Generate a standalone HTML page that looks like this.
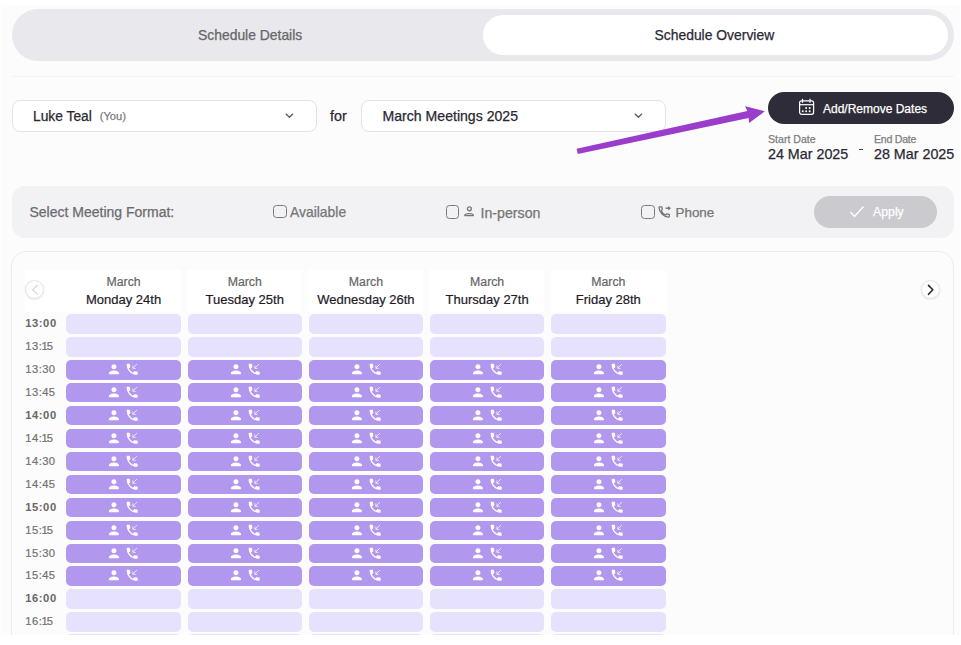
<!DOCTYPE html>
<html><head><meta charset="utf-8">
<style>
*{box-sizing:border-box;margin:0;padding:0}
html,body{width:961px;height:645px;overflow:hidden;background:#fff;font-family:"Liberation Sans",sans-serif}
#page{position:absolute;left:1px;top:5px;width:959px;height:630px;background:#fcfcfc;overflow:hidden}
.abs{position:absolute}
.t{position:absolute;white-space:nowrap;line-height:1;-webkit-text-stroke:0.25px currentColor}
#tabs{left:10.5px;top:3.8px;width:942.5px;height:52px;border-radius:26px;background:#e9e8ed}
#tabon{left:481.6px;top:10.4px;width:465.9px;height:39.6px;border-radius:20px;background:#fff}
#sep{left:10.5px;top:71px;width:942.5px;height:1px;background:#f3f3f4}
.dd{position:absolute;top:94.9px;height:31.8px;border:1.3px solid #e3e2ea;border-radius:8px;background:#fff}
.chev{position:absolute;width:5px;height:5px;border-right:1.3px solid #555;border-bottom:1.3px solid #555;transform:rotate(45deg)}
#addbtn{left:767px;top:86.6px;width:185.7px;height:32.6px;border-radius:17px;background:#2e2c38}
#filter{left:10.5px;top:180.8px;width:942.3px;height:52.2px;border-radius:13px;background:#f2f2f4}
.cb{position:absolute;width:13.5px;height:13.3px;border:1.75px solid #7a7a7a;border-radius:3.5px;background:transparent}
#apply{left:813px;top:190.6px;width:122.6px;height:32.4px;border-radius:17px;background:#cbcacf}
#card{left:10.2px;top:246.2px;width:942.9px;height:420px;border:1px solid #ebebef;border-radius:15px;background:#fcfcfc}
.hd{position:absolute;top:264.5px;height:42px;background:#fff}
.slot{position:absolute;height:19.4px;border-radius:5px}
.l{background:#e6e2fd}
.d{background:#b198ee}
.ic{position:absolute;left:39.2px;top:0}
.tm{position:absolute;left:24.3px;font-size:11.2px;color:#717171;line-height:1;letter-spacing:0.45px;white-space:nowrap;-webkit-text-stroke:0.2px currentColor}
.tm .o{margin-left:-0.8px;margin-right:-1.4px}
.tm.b{font-weight:bold;color:#676767;letter-spacing:0.55px;-webkit-text-stroke:0}
.hc{position:absolute;top:270.7px;width:114.5px;text-align:center;line-height:1;-webkit-text-stroke:0.2px currentColor}
.mo{font-size:12.3px;color:#666;height:17.8px}
.dy{font-size:13px;color:#1d1b26}
.circ{position:absolute;width:19px;height:19px;border-radius:50%;background:#fff;box-shadow:0 1px 2px rgba(40,40,80,.10);border:1.2px solid #e6e5ec}
</style></head>
<body>
<svg width="0" height="0" style="position:absolute">
 <defs>
  <symbol id="pp" viewBox="0 0 24 24" width="15.1" height="15.1"><path fill="#fff" d="M12 12c2.21 0 4-1.79 4-4s-1.79-4-4-4-4 1.79-4 4 1.79 4 4 4zm0 2c-2.67 0-8 1.34-8 4v1c0 .55.45 1 1 1h14c.55 0 1-.45 1-1v-1c0-2.66-5.33-4-8-4z"/></symbol>
  <symbol id="ph" viewBox="0 0 24 24" width="14.7" height="14.7"><path fill="#fff" d="M20 15.5c-1.25 0-2.45-.2-3.57-.57-.35-.11-.74-.03-1.02.24l-2.2 2.2c-2.83-1.44-5.15-3.75-6.59-6.59l2.2-2.21c.28-.26.36-.65.25-1C8.7 6.45 8.5 5.25 8.5 4c0-.55-.45-1-1-1H4c-.55 0-1 .45-1 1 0 9.39 7.61 17 17 17 .55 0 1-.45 1-1v-3.5c0-.55-.45-1-1-1z"/><path fill="none" stroke="#fff" stroke-opacity=".9" stroke-width="1.3" d="M19.8 3.4L13.2 10M13.2 5.6V10.4H17.8"/></symbol>
 </defs>
</svg>
<div id="page">
  <div id="tabs" class="abs"></div>
  <div id="tabon" class="abs"></div>
  <div class="t" style="left:197px;top:24.2px;font-size:13.9px;color:#666">Schedule Details</div>
  <div class="t" style="left:653.5px;top:24.2px;font-size:13.9px;color:#2a2833">Schedule Overview</div>
  <div id="sep" class="abs"></div>

  <div class="dd" style="left:10.7px;width:305.5px"></div>
  <div class="t" style="left:32px;top:105px;font-size:13.8px;color:#2a2833">Luke Teal</div>
  <div class="t" style="left:98.7px;top:106px;font-size:11.2px;color:#7a7a7a">(You)</div>
  
  <div class="t" style="left:329px;top:104px;font-size:14.3px;color:#2a2833">for</div>
  <div class="dd" style="left:360.2px;width:304.9px"></div>
  <div class="t" style="left:381.5px;top:103.7px;font-size:14.1px;color:#2a2833">March Meetings 2025</div>
  

  <div id="addbtn" class="abs"></div>
  <svg class="abs" style="left:797px;top:93px" width="18" height="18" viewBox="0 0 18 18" fill="none" stroke="#fff" stroke-width="1.2">
    <rect x="1.6" y="2.8" width="14" height="13.5" rx="2"/>
    <line x1="1.6" y1="6.7" x2="15.6" y2="6.7"/>
    <line x1="4.5" y1="0.8" x2="4.5" y2="4.8"/><line x1="12" y1="0.8" x2="12" y2="4.8"/>
    <g fill="#fff" stroke="none"><rect x="7.3" y="9.2" width="1.7" height="1.7"/><rect x="10.8" y="9.2" width="1.7" height="1.7"/><rect x="3.9" y="12.4" width="1.7" height="1.7"/><rect x="7.3" y="12.4" width="1.7" height="1.7"/><rect x="10.8" y="12.4" width="1.7" height="1.7"/></g>
  </svg>
  <div class="t" style="left:822px;top:97.5px;font-size:12px;color:#fff">Add/Remove Dates</div>
  <div class="t" style="left:767px;top:129px;font-size:10.6px;color:#7c7c80">Start Date</div>
  <div class="t" style="left:767px;top:142.3px;font-size:14.3px;color:#2a2833">24 Mar 2025</div>
  <div class="abs" style="left:857.8px;top:144.1px;width:4.4px;height:1.2px;background:#444"></div>
  <div class="t" style="left:873px;top:129px;font-size:10.6px;color:#7c7c80;letter-spacing:-0.25px">End Date</div>
  <div class="t" style="left:873px;top:142.3px;font-size:14.3px;color:#2a2833">28 Mar 2025</div>

  <svg class="abs" style="left:-1px;top:-5px" width="961" height="200" fill="none">
    <path d="M286.1 114.1 L289.4 117.2 L292.7 114.1 M635.1 114.1 L638.4 117.2 L641.7 114.1" stroke="#5c5c60" stroke-width="1.35" stroke-linecap="round" stroke-linejoin="round"/>
    <path d="M576.6 148.8 L747.3 111.1 L745.2 106.2 L764.8 111.3 L749.1 123.1 L748.7 118.0 L577.8 154.0 Z" fill="#9a3dcb"/>
  </svg>

  <div id="filter" class="abs"></div>
  <div class="t" style="left:28.5px;top:200px;font-size:14px;color:#6b6b6e">Select Meeting Format:</div>
  <div class="cb" style="left:272.1px;top:200.1px"></div>
  <div class="t" style="left:289px;top:200.5px;font-size:13.9px;color:#757575">Available</div>
  <div class="cb" style="left:444.5px;top:200.4px"></div>
  <svg class="abs" style="left:462px;top:201px" width="12" height="11" viewBox="0 0 12 11" fill="none" stroke="#777" stroke-width="1.3">
    <circle cx="6.4" cy="2.8" r="1.95"/>
    <path d="M1.8 9.55 C1.8 8.1 3.9 7.55 6.1 7.55 C8.3 7.55 10.4 8.1 10.4 9.55 Z" stroke-linejoin="round"/>
  </svg>
  <div class="t" style="left:479.5px;top:200.5px;font-size:14.2px;color:#757575">In-person</div>
  <div class="cb" style="left:640px;top:200.3px"></div>
  <svg class="abs" style="left:657px;top:199.5px" width="15" height="14" viewBox="0 0 15 14" fill="none" stroke="#747474" stroke-width="1.25" stroke-linejoin="round">
    <path d="M1.7 1.9 H3.8 L4.3 4.5 L3.2 5.4 C3.9 7.5 5.6 9.3 7.7 10.0 L8.6 8.9 L11.3 9.3 V11.4 C11.3 11.8 10.9 12.1 10.5 12.1 C5.5 11.8 1.3 7.6 1.0 2.6 C1.0 2.2 1.3 1.9 1.7 1.9 Z"/>
    <path d="M7.6 3.2 H10.8" stroke-width="1.5"/>
    <path d="M10.2 0.9 L13 3.2 L10.2 5.5 Z" fill="#747474" stroke="none"/>
  </svg>
  <div class="t" style="left:674.5px;top:200.5px;font-size:13.4px;color:#757575">Phone</div>
  <div id="apply" class="abs"></div>
  <svg class="abs" style="left:848px;top:200px" width="16" height="13" viewBox="0 0 16 13" fill="none" stroke="#fff" stroke-width="1.3">
    <path d="M1.5 7 L5.5 11.5 L14.5 1.5"/>
  </svg>
  <div class="t" style="left:872px;top:201.2px;font-size:12.3px;color:#fff">Apply</div>

  <div id="card" class="abs"></div>
  <div class="hd" style="left:23.8px;width:156.2px"></div>
  <div class="hd" style="left:186px;width:115px"></div>
  <div class="hd" style="left:307.2px;width:115px"></div>
  <div class="hd" style="left:428.4px;width:115px"></div>
  <div class="hd" style="left:549.6px;width:115px"></div>
  <div class="circ" style="left:24.3px;top:275.1px"></div>
  <div class="circ" style="left:920.4px;top:275.3px"></div>
  <svg class="abs" style="left:-1px;top:-5px" width="961" height="310" fill="none" stroke-linecap="round" stroke-linejoin="round">
    <path d="M37.4 285.2 L32.7 289.8 L37.4 294.4" stroke="#d9d8df" stroke-width="1.25"/>
    <path d="M928.5 285.4 L932.8 289.8 L928.5 294.3" stroke="#2a2833" stroke-width="1.6"/>
  </svg>
  <div class="hc" style="left:65.3px"><div class="mo">March</div><div class="dy">Monday 24th</div></div>
  <div class="hc" style="left:186.5px"><div class="mo">March</div><div class="dy">Tuesday 25th</div></div>
  <div class="hc" style="left:307.7px"><div class="mo">March</div><div class="dy">Wednesday 26th</div></div>
  <div class="hc" style="left:428.9px"><div class="mo">March</div><div class="dy">Thursday 27th</div></div>
  <div class="hc" style="left:550.1px"><div class="mo">March</div><div class="dy">Friday 28th</div></div>
<div class="tm b" style="top:313.30px">13:00</div>
<div class="slot l" style="left:65.30px;top:309.30px;width:114.5px"></div>
<div class="slot l" style="left:186.50px;top:309.30px;width:114.5px"></div>
<div class="slot l" style="left:307.70px;top:309.30px;width:114.5px"></div>
<div class="slot l" style="left:428.90px;top:309.30px;width:114.5px"></div>
<div class="slot l" style="left:550.10px;top:309.30px;width:114.5px"></div>
<div class="tm" style="top:336.22px">13:<span class="o">1</span>5</div>
<div class="slot l" style="left:65.30px;top:332.22px;width:114.5px"></div>
<div class="slot l" style="left:186.50px;top:332.22px;width:114.5px"></div>
<div class="slot l" style="left:307.70px;top:332.22px;width:114.5px"></div>
<div class="slot l" style="left:428.90px;top:332.22px;width:114.5px"></div>
<div class="slot l" style="left:550.10px;top:332.22px;width:114.5px"></div>
<div class="tm" style="top:359.14px">13:30</div>
<div class="slot d" style="left:65.30px;top:355.14px;width:114.5px"><svg class="ic" width="36" height="19.4" viewBox="0 0 36 19.4"><use href="#pp" x="1.4" y="1.66"/><use href="#ph" x="19.8" y="2"/></svg></div>
<div class="slot d" style="left:186.50px;top:355.14px;width:114.5px"><svg class="ic" width="36" height="19.4" viewBox="0 0 36 19.4"><use href="#pp" x="1.4" y="1.66"/><use href="#ph" x="19.8" y="2"/></svg></div>
<div class="slot d" style="left:307.70px;top:355.14px;width:114.5px"><svg class="ic" width="36" height="19.4" viewBox="0 0 36 19.4"><use href="#pp" x="1.4" y="1.66"/><use href="#ph" x="19.8" y="2"/></svg></div>
<div class="slot d" style="left:428.90px;top:355.14px;width:114.5px"><svg class="ic" width="36" height="19.4" viewBox="0 0 36 19.4"><use href="#pp" x="1.4" y="1.66"/><use href="#ph" x="19.8" y="2"/></svg></div>
<div class="slot d" style="left:550.10px;top:355.14px;width:114.5px"><svg class="ic" width="36" height="19.4" viewBox="0 0 36 19.4"><use href="#pp" x="1.4" y="1.66"/><use href="#ph" x="19.8" y="2"/></svg></div>
<div class="tm" style="top:382.06px">13:45</div>
<div class="slot d" style="left:65.30px;top:378.06px;width:114.5px"><svg class="ic" width="36" height="19.4" viewBox="0 0 36 19.4"><use href="#pp" x="1.4" y="1.66"/><use href="#ph" x="19.8" y="2"/></svg></div>
<div class="slot d" style="left:186.50px;top:378.06px;width:114.5px"><svg class="ic" width="36" height="19.4" viewBox="0 0 36 19.4"><use href="#pp" x="1.4" y="1.66"/><use href="#ph" x="19.8" y="2"/></svg></div>
<div class="slot d" style="left:307.70px;top:378.06px;width:114.5px"><svg class="ic" width="36" height="19.4" viewBox="0 0 36 19.4"><use href="#pp" x="1.4" y="1.66"/><use href="#ph" x="19.8" y="2"/></svg></div>
<div class="slot d" style="left:428.90px;top:378.06px;width:114.5px"><svg class="ic" width="36" height="19.4" viewBox="0 0 36 19.4"><use href="#pp" x="1.4" y="1.66"/><use href="#ph" x="19.8" y="2"/></svg></div>
<div class="slot d" style="left:550.10px;top:378.06px;width:114.5px"><svg class="ic" width="36" height="19.4" viewBox="0 0 36 19.4"><use href="#pp" x="1.4" y="1.66"/><use href="#ph" x="19.8" y="2"/></svg></div>
<div class="tm b" style="top:404.98px">14:00</div>
<div class="slot d" style="left:65.30px;top:400.98px;width:114.5px"><svg class="ic" width="36" height="19.4" viewBox="0 0 36 19.4"><use href="#pp" x="1.4" y="1.66"/><use href="#ph" x="19.8" y="2"/></svg></div>
<div class="slot d" style="left:186.50px;top:400.98px;width:114.5px"><svg class="ic" width="36" height="19.4" viewBox="0 0 36 19.4"><use href="#pp" x="1.4" y="1.66"/><use href="#ph" x="19.8" y="2"/></svg></div>
<div class="slot d" style="left:307.70px;top:400.98px;width:114.5px"><svg class="ic" width="36" height="19.4" viewBox="0 0 36 19.4"><use href="#pp" x="1.4" y="1.66"/><use href="#ph" x="19.8" y="2"/></svg></div>
<div class="slot d" style="left:428.90px;top:400.98px;width:114.5px"><svg class="ic" width="36" height="19.4" viewBox="0 0 36 19.4"><use href="#pp" x="1.4" y="1.66"/><use href="#ph" x="19.8" y="2"/></svg></div>
<div class="slot d" style="left:550.10px;top:400.98px;width:114.5px"><svg class="ic" width="36" height="19.4" viewBox="0 0 36 19.4"><use href="#pp" x="1.4" y="1.66"/><use href="#ph" x="19.8" y="2"/></svg></div>
<div class="tm" style="top:427.90px">14:<span class="o">1</span>5</div>
<div class="slot d" style="left:65.30px;top:423.90px;width:114.5px"><svg class="ic" width="36" height="19.4" viewBox="0 0 36 19.4"><use href="#pp" x="1.4" y="1.66"/><use href="#ph" x="19.8" y="2"/></svg></div>
<div class="slot d" style="left:186.50px;top:423.90px;width:114.5px"><svg class="ic" width="36" height="19.4" viewBox="0 0 36 19.4"><use href="#pp" x="1.4" y="1.66"/><use href="#ph" x="19.8" y="2"/></svg></div>
<div class="slot d" style="left:307.70px;top:423.90px;width:114.5px"><svg class="ic" width="36" height="19.4" viewBox="0 0 36 19.4"><use href="#pp" x="1.4" y="1.66"/><use href="#ph" x="19.8" y="2"/></svg></div>
<div class="slot d" style="left:428.90px;top:423.90px;width:114.5px"><svg class="ic" width="36" height="19.4" viewBox="0 0 36 19.4"><use href="#pp" x="1.4" y="1.66"/><use href="#ph" x="19.8" y="2"/></svg></div>
<div class="slot d" style="left:550.10px;top:423.90px;width:114.5px"><svg class="ic" width="36" height="19.4" viewBox="0 0 36 19.4"><use href="#pp" x="1.4" y="1.66"/><use href="#ph" x="19.8" y="2"/></svg></div>
<div class="tm" style="top:450.82px">14:30</div>
<div class="slot d" style="left:65.30px;top:446.82px;width:114.5px"><svg class="ic" width="36" height="19.4" viewBox="0 0 36 19.4"><use href="#pp" x="1.4" y="1.66"/><use href="#ph" x="19.8" y="2"/></svg></div>
<div class="slot d" style="left:186.50px;top:446.82px;width:114.5px"><svg class="ic" width="36" height="19.4" viewBox="0 0 36 19.4"><use href="#pp" x="1.4" y="1.66"/><use href="#ph" x="19.8" y="2"/></svg></div>
<div class="slot d" style="left:307.70px;top:446.82px;width:114.5px"><svg class="ic" width="36" height="19.4" viewBox="0 0 36 19.4"><use href="#pp" x="1.4" y="1.66"/><use href="#ph" x="19.8" y="2"/></svg></div>
<div class="slot d" style="left:428.90px;top:446.82px;width:114.5px"><svg class="ic" width="36" height="19.4" viewBox="0 0 36 19.4"><use href="#pp" x="1.4" y="1.66"/><use href="#ph" x="19.8" y="2"/></svg></div>
<div class="slot d" style="left:550.10px;top:446.82px;width:114.5px"><svg class="ic" width="36" height="19.4" viewBox="0 0 36 19.4"><use href="#pp" x="1.4" y="1.66"/><use href="#ph" x="19.8" y="2"/></svg></div>
<div class="tm" style="top:473.74px">14:45</div>
<div class="slot d" style="left:65.30px;top:469.74px;width:114.5px"><svg class="ic" width="36" height="19.4" viewBox="0 0 36 19.4"><use href="#pp" x="1.4" y="1.66"/><use href="#ph" x="19.8" y="2"/></svg></div>
<div class="slot d" style="left:186.50px;top:469.74px;width:114.5px"><svg class="ic" width="36" height="19.4" viewBox="0 0 36 19.4"><use href="#pp" x="1.4" y="1.66"/><use href="#ph" x="19.8" y="2"/></svg></div>
<div class="slot d" style="left:307.70px;top:469.74px;width:114.5px"><svg class="ic" width="36" height="19.4" viewBox="0 0 36 19.4"><use href="#pp" x="1.4" y="1.66"/><use href="#ph" x="19.8" y="2"/></svg></div>
<div class="slot d" style="left:428.90px;top:469.74px;width:114.5px"><svg class="ic" width="36" height="19.4" viewBox="0 0 36 19.4"><use href="#pp" x="1.4" y="1.66"/><use href="#ph" x="19.8" y="2"/></svg></div>
<div class="slot d" style="left:550.10px;top:469.74px;width:114.5px"><svg class="ic" width="36" height="19.4" viewBox="0 0 36 19.4"><use href="#pp" x="1.4" y="1.66"/><use href="#ph" x="19.8" y="2"/></svg></div>
<div class="tm b" style="top:496.66px">15:00</div>
<div class="slot d" style="left:65.30px;top:492.66px;width:114.5px"><svg class="ic" width="36" height="19.4" viewBox="0 0 36 19.4"><use href="#pp" x="1.4" y="1.66"/><use href="#ph" x="19.8" y="2"/></svg></div>
<div class="slot d" style="left:186.50px;top:492.66px;width:114.5px"><svg class="ic" width="36" height="19.4" viewBox="0 0 36 19.4"><use href="#pp" x="1.4" y="1.66"/><use href="#ph" x="19.8" y="2"/></svg></div>
<div class="slot d" style="left:307.70px;top:492.66px;width:114.5px"><svg class="ic" width="36" height="19.4" viewBox="0 0 36 19.4"><use href="#pp" x="1.4" y="1.66"/><use href="#ph" x="19.8" y="2"/></svg></div>
<div class="slot d" style="left:428.90px;top:492.66px;width:114.5px"><svg class="ic" width="36" height="19.4" viewBox="0 0 36 19.4"><use href="#pp" x="1.4" y="1.66"/><use href="#ph" x="19.8" y="2"/></svg></div>
<div class="slot d" style="left:550.10px;top:492.66px;width:114.5px"><svg class="ic" width="36" height="19.4" viewBox="0 0 36 19.4"><use href="#pp" x="1.4" y="1.66"/><use href="#ph" x="19.8" y="2"/></svg></div>
<div class="tm" style="top:519.58px">15:<span class="o">1</span>5</div>
<div class="slot d" style="left:65.30px;top:515.58px;width:114.5px"><svg class="ic" width="36" height="19.4" viewBox="0 0 36 19.4"><use href="#pp" x="1.4" y="1.66"/><use href="#ph" x="19.8" y="2"/></svg></div>
<div class="slot d" style="left:186.50px;top:515.58px;width:114.5px"><svg class="ic" width="36" height="19.4" viewBox="0 0 36 19.4"><use href="#pp" x="1.4" y="1.66"/><use href="#ph" x="19.8" y="2"/></svg></div>
<div class="slot d" style="left:307.70px;top:515.58px;width:114.5px"><svg class="ic" width="36" height="19.4" viewBox="0 0 36 19.4"><use href="#pp" x="1.4" y="1.66"/><use href="#ph" x="19.8" y="2"/></svg></div>
<div class="slot d" style="left:428.90px;top:515.58px;width:114.5px"><svg class="ic" width="36" height="19.4" viewBox="0 0 36 19.4"><use href="#pp" x="1.4" y="1.66"/><use href="#ph" x="19.8" y="2"/></svg></div>
<div class="slot d" style="left:550.10px;top:515.58px;width:114.5px"><svg class="ic" width="36" height="19.4" viewBox="0 0 36 19.4"><use href="#pp" x="1.4" y="1.66"/><use href="#ph" x="19.8" y="2"/></svg></div>
<div class="tm" style="top:542.50px">15:30</div>
<div class="slot d" style="left:65.30px;top:538.50px;width:114.5px"><svg class="ic" width="36" height="19.4" viewBox="0 0 36 19.4"><use href="#pp" x="1.4" y="1.66"/><use href="#ph" x="19.8" y="2"/></svg></div>
<div class="slot d" style="left:186.50px;top:538.50px;width:114.5px"><svg class="ic" width="36" height="19.4" viewBox="0 0 36 19.4"><use href="#pp" x="1.4" y="1.66"/><use href="#ph" x="19.8" y="2"/></svg></div>
<div class="slot d" style="left:307.70px;top:538.50px;width:114.5px"><svg class="ic" width="36" height="19.4" viewBox="0 0 36 19.4"><use href="#pp" x="1.4" y="1.66"/><use href="#ph" x="19.8" y="2"/></svg></div>
<div class="slot d" style="left:428.90px;top:538.50px;width:114.5px"><svg class="ic" width="36" height="19.4" viewBox="0 0 36 19.4"><use href="#pp" x="1.4" y="1.66"/><use href="#ph" x="19.8" y="2"/></svg></div>
<div class="slot d" style="left:550.10px;top:538.50px;width:114.5px"><svg class="ic" width="36" height="19.4" viewBox="0 0 36 19.4"><use href="#pp" x="1.4" y="1.66"/><use href="#ph" x="19.8" y="2"/></svg></div>
<div class="tm" style="top:565.42px">15:45</div>
<div class="slot d" style="left:65.30px;top:561.42px;width:114.5px"><svg class="ic" width="36" height="19.4" viewBox="0 0 36 19.4"><use href="#pp" x="1.4" y="1.66"/><use href="#ph" x="19.8" y="2"/></svg></div>
<div class="slot d" style="left:186.50px;top:561.42px;width:114.5px"><svg class="ic" width="36" height="19.4" viewBox="0 0 36 19.4"><use href="#pp" x="1.4" y="1.66"/><use href="#ph" x="19.8" y="2"/></svg></div>
<div class="slot d" style="left:307.70px;top:561.42px;width:114.5px"><svg class="ic" width="36" height="19.4" viewBox="0 0 36 19.4"><use href="#pp" x="1.4" y="1.66"/><use href="#ph" x="19.8" y="2"/></svg></div>
<div class="slot d" style="left:428.90px;top:561.42px;width:114.5px"><svg class="ic" width="36" height="19.4" viewBox="0 0 36 19.4"><use href="#pp" x="1.4" y="1.66"/><use href="#ph" x="19.8" y="2"/></svg></div>
<div class="slot d" style="left:550.10px;top:561.42px;width:114.5px"><svg class="ic" width="36" height="19.4" viewBox="0 0 36 19.4"><use href="#pp" x="1.4" y="1.66"/><use href="#ph" x="19.8" y="2"/></svg></div>
<div class="tm b" style="top:588.34px">16:00</div>
<div class="slot l" style="left:65.30px;top:584.34px;width:114.5px"></div>
<div class="slot l" style="left:186.50px;top:584.34px;width:114.5px"></div>
<div class="slot l" style="left:307.70px;top:584.34px;width:114.5px"></div>
<div class="slot l" style="left:428.90px;top:584.34px;width:114.5px"></div>
<div class="slot l" style="left:550.10px;top:584.34px;width:114.5px"></div>
<div class="tm" style="top:611.26px">16:<span class="o">1</span>5</div>
<div class="slot l" style="left:65.30px;top:607.26px;width:114.5px"></div>
<div class="slot l" style="left:186.50px;top:607.26px;width:114.5px"></div>
<div class="slot l" style="left:307.70px;top:607.26px;width:114.5px"></div>
<div class="slot l" style="left:428.90px;top:607.26px;width:114.5px"></div>
<div class="slot l" style="left:550.10px;top:607.26px;width:114.5px"></div>
<div class="tm" style="top:633.10px">16:30</div>
<div class="slot l" style="left:65.30px;top:629.10px;width:114.5px"></div>
<div class="slot l" style="left:186.50px;top:629.10px;width:114.5px"></div>
<div class="slot l" style="left:307.70px;top:629.10px;width:114.5px"></div>
<div class="slot l" style="left:428.90px;top:629.10px;width:114.5px"></div>
<div class="slot l" style="left:550.10px;top:629.10px;width:114.5px"></div>
</div>
</body></html>
